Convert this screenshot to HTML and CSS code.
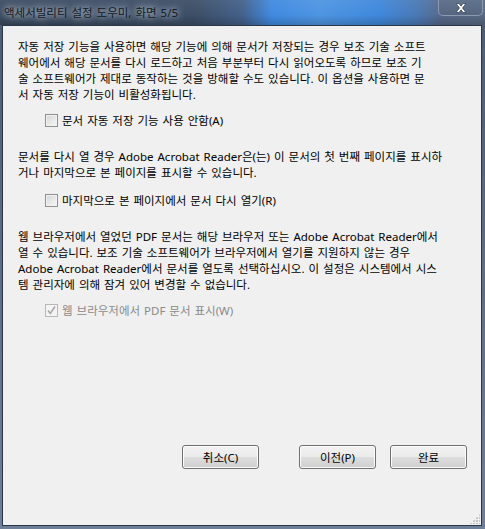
FILE: index.html
```html
<!DOCTYPE html>
<html lang="ko">
<head>
<meta charset="utf-8">
<title>액세서빌리티 설정 도우미</title>
<link rel="stylesheet" href="styles.css">
</head>
<body>
<div class="window">
  <div class="titlebar">
    <span class="title">액세서빌리티 설정 도우미, 화면 5/5</span>
    <div class="close">
      <svg width="16" height="12" viewBox="0 0 16 12"><path d="M3 1.5h3l2 2.6 2-2.6h3l-3.5 4.5 3.5 4.5h-3l-2-2.6-2 2.6h-3l3.5-4.5z" fill="#fff" stroke="#39455a" stroke-width="0.8"/></svg>
    </div>
  </div>
  <div class="client">
    <p class="para p1">자동 저장 기능을 사용하면 해당 기능에 의해 문서가 저장되는 경우 보조 기술 소프트<br>웨어에서 해당 문서를 다시 로드하고 처음 부분부터 다시 읽어오도록 하므로 보조 기<br>술 소프트웨어가 제대로 동작하는 것을 방해할 수도 있습니다. 이 옵션을 사용하면 문<br>서 자동 저장 기능이 비활성화됩니다.</p>
    <div class="check"><span class="box"></span><span>문서 자동 저장 기능 사용 안함(A)</span></div>

    <p class="para p2">문서를 다시 열 경우 Adobe Acrobat Reader은(는) 이 문서의 첫 번째 페이지를 표시하<br>거나 마지막으로 본 페이지를 표시할 수 있습니다.</p>
    <div class="check c2"><span class="box"></span><span>마지막으로 본 페이지에서 문서 다시 열기(R)</span></div>

    <p class="para p3">웹 브라우저에서 열었던 PDF 문서는 해당 브라우저 또는 Adobe Acrobat Reader에서<br>열 수 있습니다. 보조 기술 소프트웨어가 브라우저에서 열기를 지원하지 않는 경우<br>Adobe Acrobat Reader에서 문서를 열도록 선택하십시오. 이 설정은 시스템에서 시스<br>템 관리자에 의해 잠겨 있어 변경할 수 없습니다.</p>
    <div class="check disabled"><span class="box"><svg width="11" height="11" viewBox="0 0 11 11"><path d="M2 5.5l2.3 3L9 1.5" fill="none" stroke="#a8a8a8" stroke-width="1.6"/></svg></span><span>웹 브라우저에서 PDF 문서 표시(W)</span></div>

    <div class="buttons">
      <button class="btn cancel">취소(C)</button>
      <button class="btn">이전(P)</button>
      <button class="btn">완료</button>
    </div>
    <div class="grip"></div>
  </div>
</div>
</body>
</html>
```

FILE: styles.css
```css
html, body {
  margin: 0;
  padding: 0;
  background: #5d6f88;
}

.window {
  width: 485px;
  height: 529px;
  display: flex;
  flex-direction: column;
  background: linear-gradient(to bottom, #4a5b73, #6d7f99);
  font-family: "Noto Sans", "Noto Sans CJK KR", sans-serif;
  font-size: 11.5px;
  color: #000;
  box-sizing: border-box;
}

.titlebar {
  height: 25px;
  flex: none;
  display: flex;
  justify-content: space-between;
  align-items: flex-start;
  background:
    linear-gradient(to bottom, rgba(255,255,255,0.06) 0%, rgba(0,0,0,0) 60%, rgba(0,0,0,0.18) 100%),
    linear-gradient(to right, #3b4b61 0%, #3d4e66 40%, #43618a 50%, #3f8ae0 56%, #4e95e2 66%, #3f88dc 78%, #4a79b4 86%, #56698a 91%, #5a6a82 100%);
}

.title {
  margin: 5px 0 0 4px;
  font-size: 11.5px;
  line-height: 16px;
  color: #121a24;
  word-spacing: 1px;
  text-shadow: 0 0 6px rgba(230,236,245,0.9), 0 0 10px rgba(210,220,235,0.7);
}

.close {
  width: 45px;
  height: 16px;
  margin-right: 2px;
  box-sizing: border-box;
  border: 1px solid #8d9bb0;
  border-top: none;
  border-radius: 0 0 5px 5px;
  background: linear-gradient(to bottom, #61748e, #556680);
  display: flex;
  align-items: center;
  justify-content: center;
}

.client {
  position: relative;
  flex: 1;
  margin: 0 3px 3px 2px;
  border: 1px solid #2b3646;
  background: #f0f0f0;
  display: flex;
  flex-direction: column;
  padding: 13px 0 0 15px;
}

.para {
  margin: 0;
  line-height: 16px;
  white-space: nowrap;
  word-spacing: 1px;
}

.p2, .p3 { margin-top: 21px; }

.check {
  display: flex;
  align-items: center;
  gap: 4px;
  margin: 9px 0 0 27px;
  height: 16px;
  word-spacing: 1px;
}

.c2 { margin-top: 11px; }

.box {
  width: 13px;
  height: 13px;
  box-sizing: border-box;
  border: 1px solid #8e8f8f;
  background: linear-gradient(135deg, #d2d4d6 0%, #e6e7e8 50%, #f6f6f6 100%);
  box-shadow: inset 0 0 0 1px #f3f3f3;
  display: flex;
  align-items: center;
  justify-content: center;
}

.disabled { color: #8a8a8a; }
.disabled .box {
  border-color: #b8b8b8;
  background: #f4f4f4;
  box-shadow: none;
}

.buttons {
  margin-top: auto;
  display: flex;
  justify-content: flex-end;
  gap: 14px;
  padding: 0 14px 56px 0;
}

.btn {
  width: 77px;
  height: 24px;
  box-sizing: border-box;
  border: 1px solid #707070;
  border-radius: 3px;
  background: linear-gradient(to bottom, #f2f2f2 0%, #ebebeb 48%, #dddddd 52%, #cfcfcf 100%);
  box-shadow: inset 0 0 0 1px #fcfcfc;
  font-family: "Noto Sans", "Noto Sans CJK KR", sans-serif;
  font-size: 11.5px;
  color: #000;
  padding: 0;
}

.cancel { margin-right: 26px; }

.grip {
  position: absolute;
  right: 1px;
  bottom: 1px;
  width: 10px;
  height: 10px;
  background:
    radial-gradient(circle at 1px 1px, #c4c4c4 1px, transparent 1.2px) 0 0 / 3px 3px;
  clip-path: polygon(100% 0, 100% 100%, 0 100%);
}
```
